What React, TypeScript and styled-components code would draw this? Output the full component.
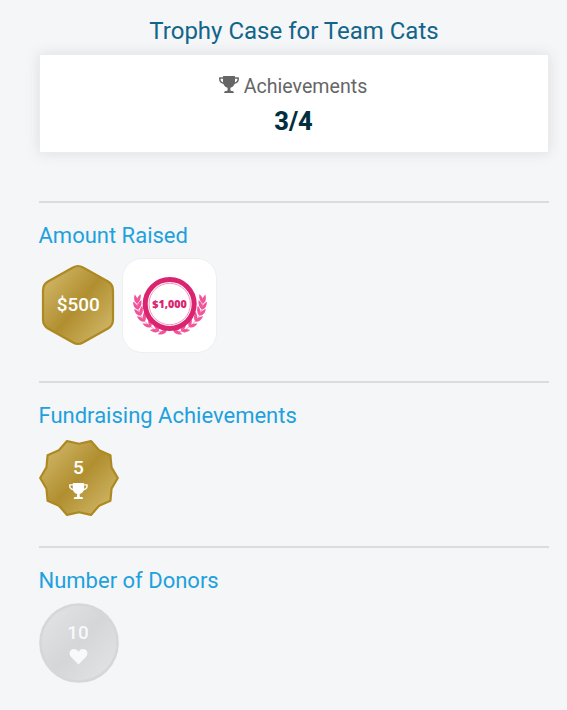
import React from "react";
import styled, { createGlobalStyle } from "styled-components";

const GlobalStyle = createGlobalStyle`
  *, *::before, *::after { box-sizing: border-box; }
  body { margin: 0; background: #f4f6f8; font-family: Roboto, sans-serif; }
`;

const Page = styled.main`
  min-height: 710px;
  padding: 16px 18px 0 39px;
  overflow: hidden;
`;

const Title = styled.h1`
  margin: 0;
  height: 38px;
  font-size: 24px;
  line-height: 30px;
  font-weight: 400;
  text-align: center;
  white-space: nowrap;
  color: #12658a;
`;

const Summary = styled.section`
  display: flex;
  flex-direction: column;
  align-items: center;
  height: 99px;
  padding-top: 20px;
  background: #fff;
  border: 1px solid #ececee;
  box-shadow: 0 0 14px rgba(0, 0, 0, 0.1);
`;

const SummaryLabel = styled.div`
  display: flex;
  align-items: flex-start;
  gap: 5px;
  height: 24px;
  padding-right: 2px;
  font-size: 19.6px;
  line-height: 23px;
  color: #666;
`;

const SummaryValue = styled.div`
  margin-top: 7px;
  padding-right: 1px;
  font-size: 25.4px;
  line-height: 30px;
  font-weight: 800;
  color: #022f40;
`;

const Group = styled.section<{ $height: number; $first?: boolean }>`
  height: ${(p) => p.$height}px;
  margin-top: ${(p) => (p.$first ? 48 : 0)}px;
  border-top: 2px solid #dadcde;
`;

const GroupTitle = styled.h2`
  margin: 0 0 0 -0.5px;
  padding-top: 18px;
  font-size: 22px;
  line-height: 30px;
  font-weight: 400;
  white-space: nowrap;
  color: #1ea1dc;
`;

const Badges = styled.div`
  display: flex;
  align-items: center;
  gap: 4px;
  padding-top: 7px;
`;

const Art = styled.svg`
  display: block;
  flex: none;
  overflow: visible;
  font-family: Roboto, sans-serif;
`;

const Tile = styled.div`
  display: flex;
  align-items: center;
  justify-content: center;
  width: 95px;
  height: 95px;
  background: #fff;
  border: 1px solid #eeeff1;
  border-radius: 20px;
`;

const TrophyShape = ({ color }: { color: string }) => (
  <g>
    <path
      d="M4.500 2H.8v1.300C.8 5.500 2.600 7 5.500 7.300M15.500 2h3.700v1.300C19.200 5.500 17.400 7 14.500 7.300"
      fill="none" stroke={color} strokeWidth="1.500" strokeLinejoin="round"
    />
    <path
      d="M4.400 0H15.600Q16 0 16 .6V5.500C16 8.700 14.200 11 11.400 11.700V14Q11.400 15 12.700 15H13.700Q14.900 15.300 14.900 17H5.100Q5.100 15.300 6.300 15H7.300Q8.600 15 8.600 14V11.700C5.800 11 4 8.700 4 5.500V.6Q4 0 4.400 0Z"
      fill={color}
    />
  </g>
);

const Trophy = () => (
  <Art width="20" height="18" viewBox="0 -1 20 18">
    <TrophyShape color="#666" />
  </Art>
);

const Metal = ({ id, light, dark }: { id: string; light: string; dark: string }) => (
  <linearGradient id={id} x1="0.05" y1="0.1" x2="0.95" y2="0.9">
    <stop offset="0" stopColor={light} />
    <stop offset="0.5" stopColor={dark} />
    <stop offset="1" stopColor={light} />
  </linearGradient>
);

const HexBadge = () => (
  <Art width="79" height="82" viewBox="0 1 79 82">
    <defs><Metal id="hex-metal" light="#d1b768" dark="#b18f30" /></defs>
    <path
      d="M34 3.500Q39 .5 44 3.500L69 17.500Q74 20.500 74 26.500V55.500Q74 61.500 69 64.500L44 78.500Q39 81.500 34 78.500L9 64.500Q4 61.500 4 55.500V26.500Q4 20.500 9 17.500Z"
      fill="url(#hex-metal)" stroke="#ad8922" strokeWidth="2.200"
    />
    <text x="39.300" y="47" fontSize="18.900" fontWeight="500" fill="#fff" textAnchor="middle">$500</text>
  </Art>
);

const starPoints = Array.from({ length: 20 }, (_, i) => {
  const r = i % 2 ? 34.2 : 38.8;
  const a = (i * Math.PI) / 10;
  return `${(40 + r * Math.cos(a)).toFixed(2)},${(40 + r * Math.sin(a)).toFixed(2)}`;
}).join(" ");

const StarBadge = () => (
  <Art width="80" height="80" viewBox="0 0 80 80">
    <defs><Metal id="star-metal" light="#d1b768" dark="#b18f30" /></defs>
    <polygon points={starPoints} fill="url(#star-metal)" stroke="#ad8922" strokeWidth="2.200" strokeLinejoin="round" />
    <text x="39.500" y="36" fontSize="19" fontWeight="500" fill="#fff" textAnchor="middle">5</text>
    <g transform="translate(30 45) scale(.94)"><TrophyShape color="#fff" /></g>
  </Art>
);

const DonorBadge = () => (
  <Art width="80" height="80" viewBox="0 0 80 80">
    <defs><Metal id="donor-metal" light="#e2e3e4" dark="#d4d6d7" /></defs>
    <circle cx="40" cy="40" r="38.500" fill="url(#donor-metal)" stroke="#d5d7d9" strokeWidth="2.600" />
    <text x="39" y="36" fontSize="18.800" fontWeight="500" fill="#f8f9fb" textAnchor="middle">10</text>
    <path d="M39.500 61.500L32.300 54.300C28.500 50.100 31.500 46 35 46c2 0 3.500 1.200 4.500 2.700C40.500 47.200 42 46 44 46c3.500 0 6.500 4.100 2.700 8.300Z" fill="#f8f9fb" />
  </Art>
);

const leafPath = "M0 0C-3 -2 -3 -6 0 -10C2.500 -6 2.500 -2 0 0Z";

/* Each stem node carries an outward and an inward leaf: x, y, outer angle, inner angle. */
const leafNodes = [
  [4, 27.500, -14, 22],
  [5, 33.500, -32, 20],
  [7.500, 39.500, -44, 10],
  [11.500, 45.500, -56, 0],
  [18, 51, -68, -12],
  [26, 55, -84, -32],
  [33.500, 55, -110, -58],
];

const Laurel = () => (
  <g fill="#f0559a">
    <path d="M4 26Q4.500 40 16 49.500T34 54" fill="none" stroke="#f0559a" strokeWidth=".6" />
    {leafNodes.map(([x, y, outer, inner]) => (
      <g key={x} transform={`translate(${x} ${y})`}>
        <path d={leafPath} transform={`rotate(${outer}) scale(.8 .92)`} />
        <path d={leafPath} transform={`rotate(${inner}) scale(.8 1)`} />
      </g>
    ))}
  </g>
);

const LaurelBadge = () => (
  <Art width="74" height="60" viewBox="0 0 74 60">
    <Laurel />
    <g transform="translate(74 0) scale(-1 1)"><Laurel /></g>
    <circle cx="36.700" cy="28" r="24.500" fill="#fff" stroke="#da246f" strokeWidth="5" />
    <circle cx="36.700" cy="28" r="20.700" fill="none" stroke="#f08bb5" strokeWidth=".9" />
    <text x="36.500" y="31.500" fontFamily="Open Sans" fontSize="10.700" fontWeight="800" fill="#da246f" textAnchor="middle">$1,000</text>
  </Art>
);

export default function App() {
  return (
    <>
      <GlobalStyle />
      <Page>
        <Title>Trophy Case for Team Cats</Title>
        <Summary>
          <SummaryLabel><Trophy />Achievements</SummaryLabel>
          <SummaryValue>3/4</SummaryValue>
        </Summary>
        <Group $height={180} $first>
          <GroupTitle>Amount Raised</GroupTitle>
          <Badges><HexBadge /><Tile><LaurelBadge /></Tile></Badges>
        </Group>
        <Group $height={165}>
          <GroupTitle>Fundraising Achievements</GroupTitle>
          <Badges><StarBadge /></Badges>
        </Group>
        <Group $height={164}>
          <GroupTitle>Number of Donors</GroupTitle>
          <Badges><DonorBadge /></Badges>
        </Group>
      </Page>
    </>
  );
}
